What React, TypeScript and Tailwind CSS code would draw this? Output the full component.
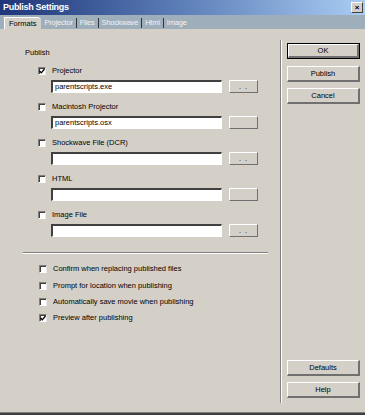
const font = { fontFamily: '"Liberation Sans", Arial, sans-serif' }

function Check({ checked }: { checked?: boolean }) {
  return (
    <div className="w-[8px] h-[8px] bg-white border-t border-l border-[#808080] border-b border-r border-b-white border-r-[#e8e8e8] shadow-[inset_1px_1px_0_#404040] flex items-center justify-center shrink-0">
      {checked && (
        <svg width="6" height="6" viewBox="0 0 6 6">
          <path d="M0.5 3 L2.3 4.8 L5.5 1" stroke="#000" strokeWidth="1.3" fill="none" />
        </svg>
      )}
    </div>
  )
}

function Field({ value }: { value?: string }) {
  return (
    <div className="w-[171px] h-[13px] bg-white border-t-2 border-l-2 border-t-[#404040] border-l-[#404040] border-b border-r border-b-white border-r-white flex items-center px-[2px] text-[7.5px] text-black leading-none">
      {value}
    </div>
  )
}

function SmallButton({ dots }: { dots?: boolean }) {
  return (
    <div className="w-[29px] h-[13px] ml-[7px] border-t border-l border-white border-b border-r border-b-[#707070] border-r-[#707070] flex items-center justify-center text-[7px] text-black leading-none tracking-[1px]">
      {dots ? '. .' : ''}
    </div>
  )
}

function Group({ label, checked, value, dots, top }: { label: string; checked?: boolean; value?: string; dots?: boolean; top: string }) {
  return (
    <div className={top}>
      <div className="flex items-center ml-[38px] h-[8px]">
        <Check checked={checked} />
        <span className="ml-[6px] text-[7.5px] leading-none text-black">{label}</span>
      </div>
      <div className="flex ml-[51px] mt-[5px]">
        <Field value={value} />
        <SmallButton dots={dots} />
      </div>
    </div>
  )
}

function Option({ label, checked, top }: { label: string; checked?: boolean; top: string }) {
  return (
    <div className={`flex items-center ml-[39px] h-[8px] ${top}`}>
      <Check checked={checked} />
      <span className="ml-[6px] text-[7.5px] leading-none text-black">{label}</span>
    </div>
  )
}

function Btn({ label, def, top }: { label: string; def?: boolean; top: string }) {
  return (
    <div
      className={`w-[73px] h-[16px] ${top} ${def ? 'border border-black' : ''} bg-[#d4d0c8]`}
    >
      <div className="w-full h-full border-t border-l border-white border-b-2 border-r-2 border-b-[#707070] border-r-[#707070] flex items-center justify-center text-[7.5px] leading-none text-black">
        {label}
      </div>
    </div>
  )
}

export default function App() {
  const tabs = ['Projector', 'Files', 'Shockwave', 'Html', 'Image']
  return (
    <div className="w-[365px] h-[415px] bg-[#d4d0c8] flex flex-col overflow-hidden" style={font}>
      {/* Title bar */}
      <div className="h-[15px] flex items-center justify-between bg-gradient-to-r from-[#1f3579] via-[#5d7fb8] to-[#aacdf4] pl-[3px] pr-[2px]">
        <span className="text-white font-bold text-[9px] leading-none tracking-[-0.3px]">Publish Settings</span>
        <div className="w-[12px] h-[11px] bg-[#d4d0c8] border-t border-l border-white border-b border-r border-b-[#404040] border-r-[#404040] flex items-center justify-center text-[8px] font-bold leading-none text-black">
          ×
        </div>
      </div>

      {/* Tabs */}
      <div className="h-[14px] bg-[#9eafbb] flex items-end pl-[4px] text-[7.5px] leading-none">
        <div className="h-[12px] px-[4px] mr-[1px] bg-[#d4d0c8] border-t border-l border-white rounded-tr-[4px] flex items-center text-black">
          Formats
        </div>
        {tabs.map((t, i) => (
          <div key={t} className="flex items-center h-[12px]">
            {i > 0 && <div className="w-px h-[10px] bg-[#30363c]" />}
            <span className="px-[3px] text-[#eef2f5] tracking-[-0.2px]">{t}</span>
          </div>
        ))}
      </div>

      {/* Body */}
      <div className="flex flex-1">
        <div className="w-[280px] flex flex-col">
          <div className="ml-[25px] mt-[20px] text-[7.5px] leading-none text-black">Publish</div>
          <Group label="Projector" checked value="parentscripts.exe" dots top="mt-[10px]" />
          <Group label="Macintosh Projector" value="parentscripts.osx" top="mt-[10px]" />
          <Group label="Shockwave File (DCR)" dots top="mt-[10px]" />
          <Group label="HTML" top="mt-[10px]" />
          <Group label="Image File" dots top="mt-[10px]" />
          <div className="ml-[23px] mt-[15px] w-[245px] h-[2px] border-t border-[#808080] border-b border-b-white" />
          <Option label="Confirm when replacing published files" top="mt-[11px]" />
          <Option label="Prompt for location when publishing" top="mt-[9px]" />
          <Option label="Automatically save movie when publishing" top="mt-[8px]" />
          <Option label="Preview after publishing" top="mt-[8px]" checked />
        </div>

        <div className="mt-[11px] mb-[9px] w-[2px] border-l border-[#808080] border-r border-r-white" />

        <div className="flex flex-col ml-[5px]">
          <Btn label="OK" def top="mt-[14px]" />
          <Btn label="Publish" top="mt-[7px]" />
          <Btn label="Cancel" top="mt-[6px]" />
          <div className="flex-1" />
          <Btn label="Defaults" top="" />
          <Btn label="Help" top="mt-[6px] mb-[14px]" />
        </div>
      </div>

      <div className="h-[3px] border-t border-[#808080] bg-[#404040]" />
    </div>
  )
}
